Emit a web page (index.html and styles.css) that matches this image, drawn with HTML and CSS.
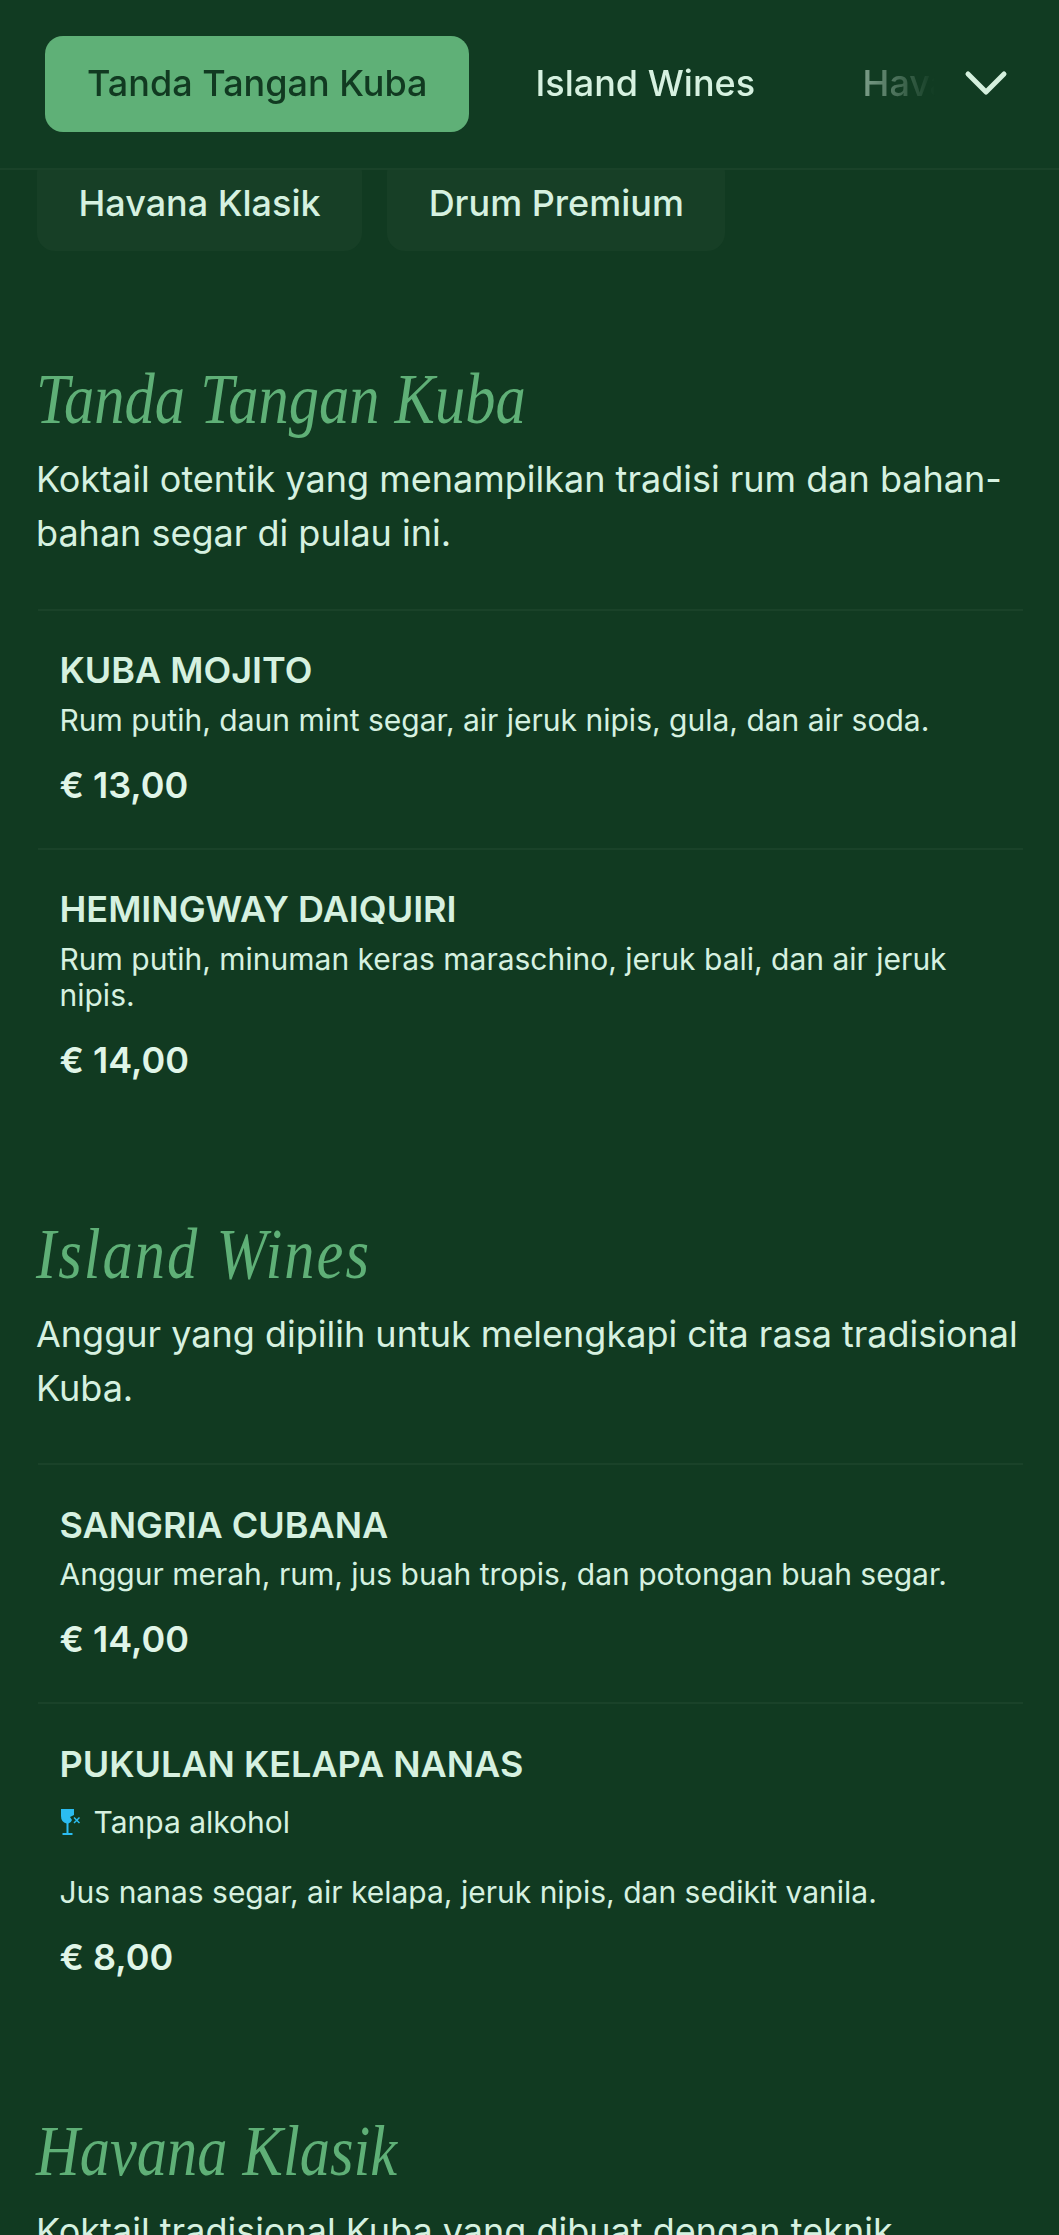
FILE: index.html
```html
<!DOCTYPE html>
<html lang="id">
<head>
<meta charset="utf-8">
<title>Menu</title>
<link rel="stylesheet" href="styles.css">
</head>
<body>
<header class="topbar">
  <nav class="tabs">
    <a class="tab tab-active">Tanda Tangan Kuba</a>
    <a class="tab">Island Wines</a>
    <a class="tab">Havana Klasik</a>
    <a class="tab">Drum Premium</a>
  </nav>
  <svg class="chevron" viewBox="0 0 44 28" width="44" height="28" aria-hidden="true"><path d="M4 5 L22 23 L40 5" fill="none" stroke="#d4efdd" stroke-width="5" stroke-linecap="round" stroke-linejoin="round"/></svg>
</header>
<div class="pills">
  <a class="pill">Havana Klasik</a>
  <a class="pill">Drum Premium</a>
</div>
<main>
  <section class="group">
    <h2 class="group-title">Tanda Tangan Kuba</h2>
    <p class="group-desc">Koktail otentik yang menampilkan tradisi rum dan bahan-bahan segar di pulau ini.</p>
    <ul class="items">
      <li class="item">
        <h3 class="item-name">KUBA MOJITO</h3>
        <p class="item-desc">Rum putih, daun mint segar, air jeruk nipis, gula, dan air soda.</p>
        <p class="item-price">€ 13,00</p>
      </li>
      <li class="item">
        <h3 class="item-name">HEMINGWAY DAIQUIRI</h3>
        <p class="item-desc">Rum putih, minuman keras maraschino, jeruk bali, dan air jeruk nipis.</p>
        <p class="item-price">€ 14,00</p>
      </li>
    </ul>
  </section>
  <section class="group">
    <h2 class="group-title group-title-wide">Island Wines</h2>
    <p class="group-desc">Anggur yang dipilih untuk melengkapi cita rasa tradisional Kuba.</p>
    <ul class="items">
      <li class="item">
        <h3 class="item-name">SANGRIA CUBANA</h3>
        <p class="item-desc">Anggur merah, rum, jus buah tropis, dan potongan buah segar.</p>
        <p class="item-price">€ 14,00</p>
      </li>
      <li class="item">
        <h3 class="item-name">PUKULAN KELAPA NANAS</h3>
        <div class="tag">
          <svg class="tag-icon" viewBox="0 0 20 28" width="20" height="28" aria-hidden="true">
            <path d="M1 1 H14 L14 7 L10 9 L12 12 Q11 15 8.5 15.5 V25 H12.5 V27 H2.5 V25 H6.5 V15.5 Q1 14 1 8 Z" fill="#2bbcf0"/>
            <path d="M14 9.5 L19.5 15 M19.5 9.5 L14 15" stroke="#2bbcf0" stroke-width="1.5" fill="none"/>
          </svg>
          <span>Tanpa alkohol</span>
        </div>
        <p class="item-desc">Jus nanas segar, air kelapa, jeruk nipis, dan sedikit vanila.</p>
        <p class="item-price">€ 8,00</p>
      </li>
    </ul>
  </section>
  <section class="group">
    <h2 class="group-title">Havana Klasik</h2>
    <p class="group-desc">Koktail tradisional Kuba yang dibuat dengan teknik tradisional.</p>
  </section>
</main>
</body>
</html>
```
FILE: styles.css
```css
* { box-sizing: border-box; }
html, body { margin: 0; padding: 0; height: 100%; overflow: hidden; }
body {
  background: #113a21;
  color: #d6f1e0;
  font-family: Inter, "Liberation Sans", sans-serif;
}
.topbar {
  position: relative;
  z-index: 2;
  height: 170px;
  display: flex;
  align-items: flex-start;
  background: #113b22;
  border-bottom: 2px solid #1a4229;
  padding: 36px 0 0 45px;
}
.tabs {
  display: flex;
  gap: 24.5px;
  width: 890px;
  overflow: hidden;
  flex: none;
  -webkit-mask-image: linear-gradient(to right, #000 85%, transparent 100%);
  mask-image: linear-gradient(to right, #000 85%, transparent 100%);
}
.tab {
  flex: none;
  height: 96px;
  padding: 0 41.5px 2px;
  display: flex;
  align-items: center;
  border-radius: 18px;
  font-size: 36px;
  line-height: 44px;
  font-weight: 500;
  color: #d6f1e0;
  white-space: nowrap;
}
.tab-active { background: #5fb077; color: #113a21; padding: 0 42px 2px; }
.chevron { margin: 33px 0 0 29px; flex: none; }
.pills {
  display: flex;
  gap: 25px;
  padding-left: 37px;
  margin-top: -16px;
}
.pill {
  height: 97px;
  padding: 0 41.5px;
  display: flex;
  align-items: center;
  border-radius: 18px;
  background: #173f26;
  font-size: 36px;
  font-weight: 500;
  color: #d6f1e0;
  white-space: nowrap;
}
main { padding: 0 36px; }
.group { margin-bottom: 86px; }
.group:first-child { margin-top: 103px; }
.group-title {
  margin: 0;
  font-family: "Liberation Serif", cursive;
  font-style: italic;
  font-weight: 400;
  font-size: 72px;
  line-height: 90px;
  color: #5fb077;
  transform: scaleX(0.84);
  transform-origin: left center;
  white-space: nowrap;
}
.group-title-wide { letter-spacing: 2.4px; }
.group-desc {
  margin: 8px 0 0;
  font-size: 36px;
  line-height: 54px;
  color: #d6f1e0;
}
.items { list-style: none; margin: 48.5px 0 0; padding: 0; }
.item {
  border-top: 2px solid #1a4229;
  padding: 37.5px 21.5px 41px;
  margin-left: 2px;
}
.item-name {
  margin: 0;
  font-size: 36px;
  line-height: 44px;
  font-weight: 600;
  color: #d6f1e0;
}
.item-desc {
  margin: 9.5px 0 0;
  font-size: 30px;
  line-height: 36px;
  color: #d6f1e0;
}
.item-price {
  margin: 25px 0 0;
  font-size: 36px;
  line-height: 44px;
  font-weight: 600;
  color: #e0f5e8;
}
.tag {
  display: flex;
  align-items: center;
  gap: 14px;
  margin-top: 18px;
  font-size: 30px;
  line-height: 36px;
  margin-bottom: 34.5px;
}
.tag-icon { flex: none; }
```
